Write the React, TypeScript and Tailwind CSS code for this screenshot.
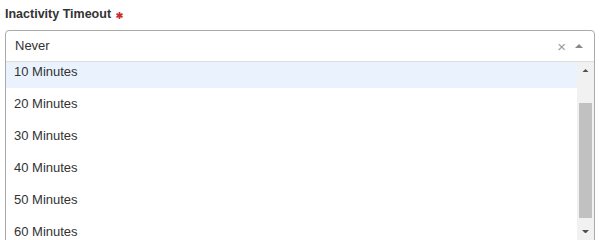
import React from 'react';

const options = ['10 Minutes', '20 Minutes', '30 Minutes', '40 Minutes', '50 Minutes', '60 Minutes'];

function RequiredMark() {
  return (
    <svg viewBox="0 0 10 10" className="ml-[5px] mt-[3px] h-[7px] w-[7px]" aria-hidden>
      <g stroke="#c9302c" strokeWidth="2.6" strokeLinecap="round">
        <line x1="5" y1="1.2" x2="5" y2="8.8" />
        <line x1="1.6" y1="3" x2="8.4" y2="7" />
        <line x1="1.6" y1="7" x2="8.4" y2="3" />
      </g>
    </svg>
  );
}

function Triangle({ up, color, size = 8 }: { up?: boolean; color: string; size?: number }) {
  return (
    <svg viewBox="0 0 8 4" width={size} height={size / 2} aria-hidden>
      <path d={up ? 'M0 4 L4 0 L8 4 Z' : 'M0 0 L8 0 L4 4 Z'} fill={color} />
    </svg>
  );
}

export default function App() {
  return (
    <div className="h-[240px] w-[607px] overflow-hidden bg-white pl-[5px] font-['Liberation_Sans',Arial,sans-serif] text-[#333]">
      <div className="flex h-[30px] items-center pb-[2px]">
        <span className="text-[12.5px] font-bold">Inactivity Timeout</span>
        <RequiredMark />
      </div>

      <div className="w-[590px] rounded-t-[4px] border border-[#aaa]">
        <div className="flex h-[31px] items-center border-b border-[#ddd] pl-[9px] pr-[11px]">
          <span className="flex-1 text-[13px]">Never</span>
          <span className="mr-[9px] text-[15px] leading-none text-[#999]">×</span>
          <Triangle up color="#888" />
        </div>

        <div className="flex h-[178px]">
          <div className="flex-1 overflow-hidden">
            <div className="-mt-[6px]">
              {options.map((o, i) => (
                <div
                  key={o}
                  className={`flex h-[32px] items-center pl-[8px] text-[13px] ${i === 0 ? 'bg-[#eaf3fd]' : ''}`}
                >
                  {o}
                </div>
              ))}
            </div>
          </div>

          <div className="flex w-[17px] flex-col bg-[#f1f1f1]">
            <div className="flex h-[17px] items-center justify-center">
              <Triangle up color="#505050" size={7} />
            </div>
            <div className="h-[24px]" />
            <div className="mx-[2px] h-[115px] bg-[#c1c1c1]" />
            <div className="flex-1" />
            <div className="flex h-[17px] items-center justify-center">
              <Triangle color="#505050" size={7} />
            </div>
          </div>
        </div>
      </div>
    </div>
  );
}
